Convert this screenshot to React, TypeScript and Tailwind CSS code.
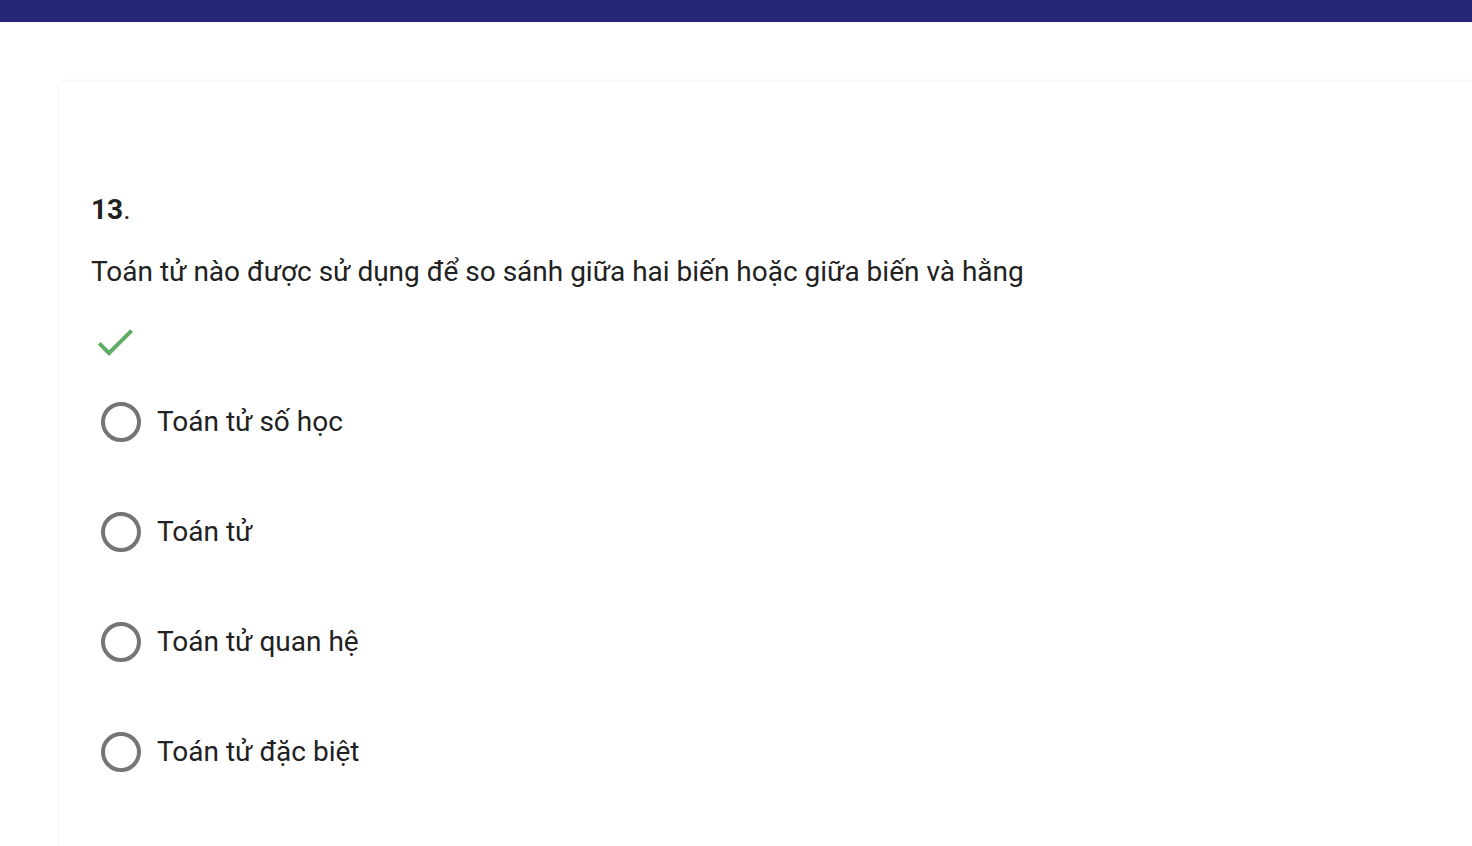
export default function App() {
  const options = ["Toán tử số học", "Toán tử", "Toán tử quan hệ", "Toán tử đặc biệt"];

  return (
    <div className="h-screen overflow-hidden bg-white" style={{ fontFamily: "Roboto, 'Noto Sans', sans-serif" }}>
      <div className="h-[22px] bg-[#27277a]" />
      <div className="pl-[59px] pt-[60px]">
        <div className="min-h-[900px] rounded-tl-lg bg-white shadow-[0_0_4px_rgba(0,0,0,0.08)] pl-[32px] pt-[111px] pb-10">
          <div className="text-[28px] leading-[34px] text-[#212121]">
            <span className="font-bold">13</span>.
          </div>
          <p className="mt-[28px] text-[28px] leading-[34px] text-[#212121]">
            Toán tử nào được sử dụng để so sánh giữa hai biến hoặc giữa biến và hằng
          </p>
          <svg className="mt-[29px] h-12 w-12" viewBox="0 0 24 24" fill="#5fad65">
            <path d="M9 16.17L4.83 12l-1.42 1.41L9 19 21 7l-1.41-1.41z" />
          </svg>
          <div className="mt-[36px] flex flex-col gap-[70px] pl-[10px]">
            {options.map((o) => (
              <label key={o} className="flex items-center gap-[16px] h-10">
                <span className="h-10 w-10 rounded-full border-4 border-[#757575]" />
                <span className="text-[28px] leading-[34px] text-[#212121]">{o}</span>
              </label>
            ))}
          </div>
        </div>
      </div>
    </div>
  );
}
